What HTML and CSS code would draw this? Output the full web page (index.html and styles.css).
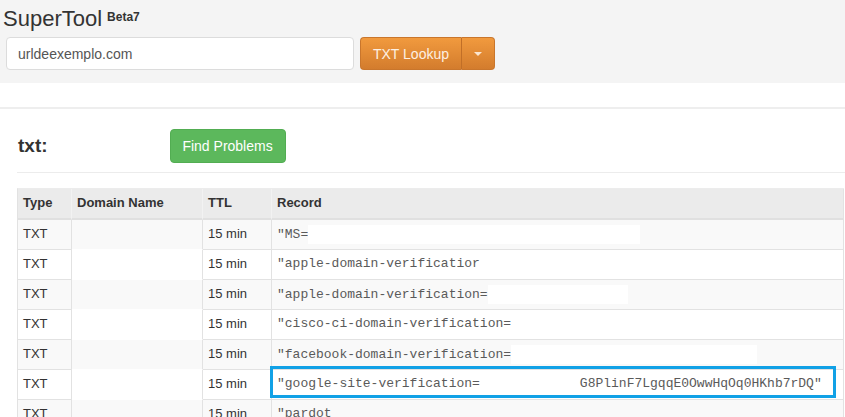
FILE: index.html
```html
<!DOCTYPE html>
<html lang="pt">
<head>
<meta charset="utf-8">
<title>SuperTool</title>
<link rel="stylesheet" href="styles.css">
</head>
<body>
<header class="topbar">
  <h1 class="brand">SuperTool<span class="beta">Beta7</span></h1>
  <div class="search">
    <input class="search-input" type="text" value="urldeexemplo.com">
    <div class="btn-group">
      <button class="btn-lookup">TXT Lookup</button>
      <button class="btn-caret"><span class="caret"></span></button>
    </div>
  </div>
</header>
<div class="spacer"></div>
<main class="content">
  <div class="result-head">
    <h2 class="result-title">txt:</h2>
    <span class="domain-blank"></span>
    <button class="btn-find">Find Problems</button>
  </div>
  <table class="records">
    <thead>
      <tr>
        <th class="c-type">Type</th>
        <th class="c-domain">Domain Name</th>
        <th class="c-ttl">TTL</th>
        <th class="c-record">Record</th>
      </tr>
    </thead>
    <tbody>
      <tr>
        <td>TXT</td><td class="c-domain"></td><td>15 min</td>
        <td class="rec">"MS=<span class="redact redact-1"></span></td>
      </tr>
      <tr>
        <td>TXT</td><td class="c-domain"></td><td>15 min</td>
        <td class="rec">"apple-domain-verificatior</td>
      </tr>
      <tr>
        <td>TXT</td><td class="c-domain"></td><td>15 min</td>
        <td class="rec">"apple-domain-verification=<span class="redact redact-3"></span></td>
      </tr>
      <tr>
        <td>TXT</td><td class="c-domain"></td><td>15 min</td>
        <td class="rec">"cisco-ci-domain-verification=</td>
      </tr>
      <tr>
        <td>TXT</td><td class="c-domain"></td><td>15 min</td>
        <td class="rec">"facebook-domain-verification=<span class="redact redact-5"></span></td>
      </tr>
      <tr>
        <td>TXT</td><td class="c-domain"></td><td>15 min</td>
        <td class="rec rec-highlight">"google-site-verification=<span class="gap"></span>G8PlinF7LgqqE0OwwHqOq0HKhb7rDQ"<span class="highlight-box"></span></td>
      </tr>
      <tr>
        <td>TXT</td><td class="c-domain"></td><td>15 min</td>
        <td class="rec">"pardot</td>
      </tr>
    </tbody>
  </table>
</main>
</body>
</html>
```

FILE: styles.css
```css
* { box-sizing: border-box; }

html, body {
  margin: 0;
  padding: 0;
  background: #fff;
  font-family: "Liberation Sans", Arial, sans-serif;
  color: #333;
  overflow: hidden;
}

.topbar {
  background: #f4f4f4;
  height: 83px;
  padding: 6px 0 0 3px;
}

.brand {
  margin: 0;
  font-size: 22px;
  line-height: 22px;
  font-weight: normal;
  color: #333;
}

.beta {
  font-size: 12px;
  font-weight: bold;
  margin-left: 5px;
  vertical-align: 5px;
}

.search {
  display: flex;
  margin-top: 7px;
  padding-left: 3px;
}

.search-input {
  width: 348px;
  height: 33px;
  border: 1px solid #dcdcdc;
  border-radius: 4px;
  background: #fff;
  padding: 0 11px;
  font-family: "Liberation Sans", Arial, sans-serif;
  font-size: 14px;
  color: #555;
  outline: none;
}

.btn-group {
  display: flex;
  margin-left: 6px;
  height: 33px;
}

.btn-lookup,
.btn-caret {
  border: 1px solid #c9762c;
  background: linear-gradient(#f19a3e, #d37c2d);
  color: #fdf0e2;
  font-family: "Liberation Sans", Arial, sans-serif;
  font-size: 14px;
  height: 33px;
  margin: 0;
  cursor: pointer;
}

.btn-lookup {
  width: 102px;
  padding: 0;
  border-radius: 4px 0 0 4px;
  border-right-color: #c16f27;
}

.btn-caret {
  width: 33px;
  padding: 0;
  border-left: none;
  border-radius: 0 4px 4px 0;
  display: flex;
  align-items: center;
  justify-content: center;
}

.caret {
  display: block;
  width: 0;
  height: 0;
  border-top: 4px solid #fbe6d0;
  border-left: 4px solid transparent;
  border-right: 4px solid transparent;
}

.spacer {
  height: 26px;
  border-bottom: 2px solid #eeeeee;
}

.content {
  padding-left: 17px;
}

.result-head {
  display: flex;
  align-items: center;
  margin-top: 20px;
  padding-bottom: 9px;
  border-bottom: 1px solid #ececec;
}

.result-title {
  margin: 0 0 0 1px;
  font-size: 19px;
  font-weight: bold;
  color: #333;
  line-height: 20px;
}

.domain-blank {
  display: inline-block;
  width: 122px;
  height: 10px;
}

.btn-find {
  background: #5cb85c;
  border: 1px solid #52ad52;
  border-radius: 4px;
  color: #fff;
  font-family: "Liberation Sans", Arial, sans-serif;
  font-size: 14px;
  line-height: 18px;
  height: 34px;
  width: 116px;
  padding: 0;
}

.records {
  margin-top: 15px;
  width: calc(100% - 1px);
  border-collapse: separate;
  border-spacing: 0;
  border-left: 1px solid #e2e2e2;
  border-top: 1px solid #ececec;
  font-size: 13px;
  line-height: 1.428571;
}

.records th,
.records td {
  padding: 5px;
  text-align: left;
  border-right: 1px solid #e2e2e2;
  border-bottom: 1px solid #e2e2e2;
  vertical-align: middle;
  color: #333;
}

.records th {
  background: #ebebeb;
  font-weight: bold;
  border-right-color: #f2f2f2;
  border-bottom: 2px solid #e0e0e0;
}

.records th:last-child { border-right-color: #e2e2e2; }

.c-type { width: 54px; }
.c-domain { width: 131px; }
.c-ttl { width: 69px; }

.records tbody tr:nth-child(odd) td { background: #f9f9f9; }
.records tbody td.c-domain {
  background: #fff;
  border-bottom-color: #fff;
}

.rec {
  font-family: "Liberation Mono", "Courier New", monospace;
  font-size: 13px;
  color: #5a5a5a !important;
  white-space: pre;
}

.redact {
  display: inline-block;
  height: 19px;
  background: #fff;
  vertical-align: middle;
}

.redact-1 { width: 332px; }
.redact-3 { width: 140px; }
.redact-5 { width: 246px; }

.gap {
  display: inline-block;
  width: 100px;
}

.rec-highlight { position: relative; }

.highlight-box {
  position: absolute;
  left: -2px;
  top: -4px;
  width: 566px;
  height: 32px;
  border: 3px solid #11a1e6;
}
```
